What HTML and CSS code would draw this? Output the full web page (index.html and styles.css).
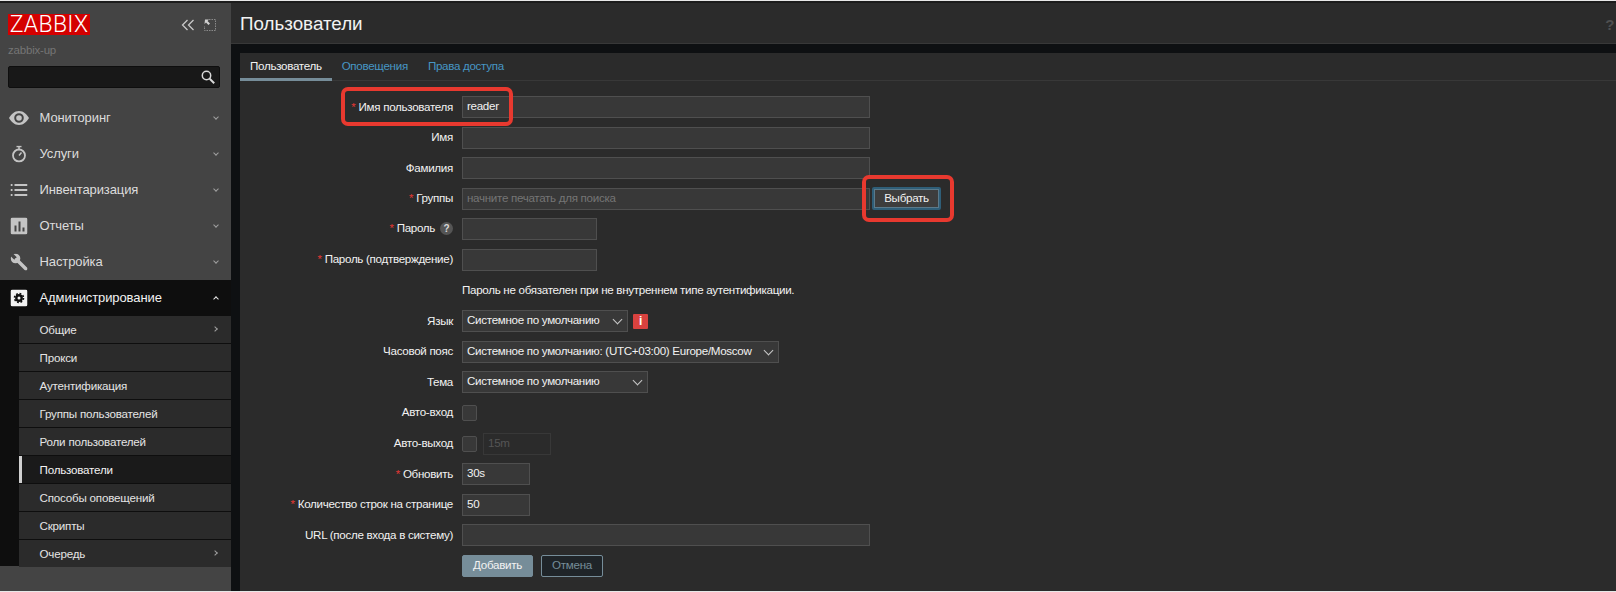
FILE: index.html
```html
<!DOCTYPE html>
<html lang="ru">
<head>
<meta charset="utf-8">
<title>Пользователи</title>
<link rel="stylesheet" href="styles.css">
</head>
<body>
<div class="app">
  <aside class="sidebar">
    <div class="brand">
      <span class="logo">ZABBIX</span>
      <div class="brand-tools">
        <svg class="tool" viewBox="0 0 14 12" width="14" height="12"><path d="M6.500 1 1.500 6l5 5M12.500 1l-5 5 5 5" fill="none" stroke="#c8c8c8" stroke-width="1.300"/></svg>
        <svg class="tool" viewBox="0 0 12 12" width="12" height="12"><path d="M5 .5h6.500V11.500H.5V7" fill="none" stroke="#8a8a8a" stroke-dasharray="1.500 1"/><path d="M1 .5h4L3.500 2 6 4.500 4.500 6 2 3.500.5 5z" fill="#d0d0d0"/></svg>
      </div>
    </div>
    <div class="host">zabbix-up</div>
    <div class="search">
      <svg viewBox="0 0 14 14" width="14" height="14"><circle cx="5.500" cy="5.500" r="4.200" fill="none" stroke="#d8d8d8" stroke-width="1.500"/><path d="m8.700 8.700 4.500 4.500" stroke="#d8d8d8" stroke-width="2"/></svg>
    </div>
    <nav class="menu">
      <a class="item"><svg class="ico" viewBox="0 0 20 14" width="20" height="14"><path fill-rule="evenodd" d="M10 0c4.600 0 8 3.500 10 7-2 3.500-5.400 7-10 7S2 10.500 0 7c2-3.500 5.400-7 10-7zm0 2.200a4.800 4.800 0 1 0 0 9.600 4.800 4.800 0 0 0 0-9.600zm0 2a2.800 2.800 0 1 1 0 5.600 2.800 2.800 0 0 1 0-5.600z" fill="#c4c4c4"/></svg><span>Мониторинг</span><i class="chev down"></i></a>
      <a class="item"><svg class="ico" viewBox="0 0 16 17" width="16" height="17"><circle cx="8" cy="10" r="6" fill="none" stroke="#c4c4c4" stroke-width="1.800"/><path d="M5.500 1h5M8 1v3M8 10l2.500-3" stroke="#c4c4c4" stroke-width="1.500" fill="none"/></svg><span>Услуги</span><i class="chev down"></i></a>
      <a class="item"><svg class="ico" viewBox="0 0 17 12" width="17" height="12"><path d="M0 1h2M4 1h13M0 6h2M4 6h13M0 11h2M4 11h13" stroke="#c4c4c4" stroke-width="2"/></svg><span>Инвентаризация</span><i class="chev down"></i></a>
      <a class="item"><svg class="ico" viewBox="0 0 17 17" width="17" height="17"><rect width="17" height="17" rx="2" fill="#c4c4c4"/><path d="M4 8h2v6H4zM8 4h2v10H8zM12 10h2v4h-2z" fill="#444"/></svg><span>Отчеты</span><i class="chev down"></i></a>
      <a class="item"><svg class="ico" viewBox="0 0 17 17" width="17" height="17"><circle cx="5" cy="5" r="4.800" fill="#c4c4c4"/><path d="M1.500-1 5.500 3l1 2-1.500 1.500L3 5.500-1 1.500z" fill="#444"/><path d="m6 6 9.300 9.300" stroke="#c4c4c4" stroke-width="3.400" stroke-linecap="round"/></svg><span>Настройка</span><i class="chev down"></i></a>
      <a class="item open"><svg class="ico" viewBox="0 0 17 17" width="17" height="17"><rect width="17" height="17" rx="2" fill="#f2f2f2"/><circle cx="8.500" cy="8.500" r="2.700" fill="none" stroke="#0e0e0e" stroke-width="2.400"/><circle cx="8.500" cy="8.500" r="4.500" fill="none" stroke="#0e0e0e" stroke-width="1.600" stroke-dasharray="1.800 1.730"/></svg><span>Администрирование</span><i class="chev up"></i></a>
      <div class="submenu">
        <a class="sub">Общие<i class="chev right"></i></a>
        <a class="sub">Прокси</a>
        <a class="sub">Аутентификация</a>
        <a class="sub">Группы пользователей</a>
        <a class="sub">Роли пользователей</a>
        <a class="sub current">Пользователи</a>
        <a class="sub">Способы оповещений</a>
        <a class="sub">Скрипты</a>
        <a class="sub">Очередь<i class="chev right"></i></a>
      </div>
    </nav>
  </aside>
  <main class="main">
    <header class="header">
      <h1>Пользователи</h1>
      <span class="help">?</span>
    </header>
    <section class="panel">
      <div class="tabs">
        <a class="tab active">Пользователь</a>
        <a class="tab">Оповещения</a>
        <a class="tab">Права доступа</a>
      </div>
      <form class="form">
        <div class="row"><label class="req">Имя пользователя</label><div class="field w-full">reader</div></div>
        <div class="row"><label>Имя</label><div class="field w-full"></div></div>
        <div class="row"><label>Фамилия</label><div class="field w-full"></div></div>
        <div class="row"><label class="req">Группы</label><div class="field w-full ph">начните печатать для поиска</div><button type="button" class="btn-select">Выбрать</button></div>
        <div class="row"><label class="req">Пароль <b class="q">?</b></label><div class="field w-pass"></div></div>
        <div class="row"><label class="req">Пароль (подтверждение)</label><div class="field w-pass"></div></div>
        <div class="row"><label></label><p class="note">Пароль не обязателен при не внутреннем типе аутентификации.</p></div>
        <div class="row"><label>Язык</label><div class="field select w-lang">Системное по умолчанию<i class="chev down lt"></i></div><b class="warn">i</b></div>
        <div class="row"><label>Часовой пояс</label><div class="field select w-tz">Системное по умолчанию: (UTC+03:00) Europe/Moscow<i class="chev down lt"></i></div></div>
        <div class="row"><label>Тема</label><div class="field select w-theme">Системное по умолчанию<i class="chev down lt"></i></div></div>
        <div class="row"><label>Авто-вход</label><div class="check"></div></div>
        <div class="row"><label>Авто-выход</label><div class="check"></div><div class="field w-auto off">15m</div></div>
        <div class="row"><label class="req">Обновить</label><div class="field w-short">30s</div></div>
        <div class="row"><label class="req">Количество строк на странице</label><div class="field w-short">50</div></div>
        <div class="row"><label>URL (после входа в систему)</label><div class="field w-full"></div></div>
        <div class="row"><label></label><button type="button" class="btn-add">Добавить</button><button type="button" class="btn-cancel">Отмена</button></div>
      </form>
    </section>
  </main>
</div>
<div class="mark mark-user"></div>
<div class="mark mark-select"></div>
</body>
</html>
```
FILE: styles.css
```css
* { box-sizing: border-box; }
html, body { margin: 0; height: 100%; }
body {
  background: #e8e8e8;
  font: 11.600px "Liberation Sans", Arial, sans-serif;
  letter-spacing: -.3px;
  color: #f2f2f2;
  overflow: hidden;
  position: relative;
}
.app {
  display: flex;
  height: 590px;
  margin-top: 1px;
  border-top: 2px solid #1c1c1c;
  background: #0e1012;
}
.sidebar {
  width: 231px;
  flex: none;
  background: #444;
  padding-top: 11px;
  display: flex;
  flex-direction: column;
}
.brand {
  display: flex;
  justify-content: space-between;
  align-items: center;
  padding: 0 15px 0 8px;
}
.logo {
  background: #d40000;
  color: #fff;
  font: 300 23px/21px Roboto, sans-serif;
  letter-spacing: .3px;
  width: 82px;
  height: 21px;
  text-align: center;
}
.brand-tools { display: flex; gap: 9px; align-items: center; }
.tool { display: block; }
.host { color: #757575; margin: 9px 0 0 8px; line-height: 13px; font-size: 11.500px; letter-spacing: -.2px; }
.search {
  margin: 9px 11px 0 8px;
  height: 22px;
  background: #181818;
  border: 1px solid #0e0e0e;
  border-radius: 2px;
  display: flex;
  align-items: center;
  justify-content: flex-end;
  padding-right: 4px;
}
.menu { margin-top: 12px; flex: 1; display: flex; flex-direction: column; }
.item {
  height: 36px;
  display: flex;
  align-items: center;
  position: relative;
  padding: 0 0 1px 39.500px;
  font-size: 13px;
  letter-spacing: -.1px;
  color: #dcdcdc;
}
.ico { position: absolute; left: 19px; top: 50%; transform: translate(-50%, -50%); }
.item.open { background: #0e0e0e; color: #f2f2f2; }
.submenu {
  background: #0e0e0e;
  padding-left: 19px;
  height: 250px;
  flex: none;
}
.sub {
  display: flex;
  align-items: center;
  justify-content: space-between;
  height: 27px;
  margin-bottom: 1px;
  padding: 0 14px 1px 20.500px;
  background: #2b2b2b;
  color: #e4e4e4;
  font-size: 11.600px;
  letter-spacing: -.2px;
}
.sub.current { background: #1a1a1a; border-left: 3px solid #d0d0d0; padding-left: 17.500px; color: #f2f2f2; }
.chev {
  width: 4px;
  height: 4px;
  border: solid #a0a0a0;
  border-width: 0 1.200px 1.200px 0;
  display: block;
}
.item .chev { position: absolute; right: 13.500px; }
.chev.down { transform: rotate(45deg); margin-top: -2px; }
.chev.up { transform: rotate(225deg); margin-top: 2px; border-color: #e8e8e8; }
.chev.right { transform: rotate(-45deg); }
.chev.lt { width: 7px; height: 7px; border-width: 0 1px 1px 0; border-color: #c8c8c8; }
.main { flex: 1; display: flex; flex-direction: column; min-width: 0; }
.header {
  height: 41px;
  background: #2b2b2b;
  border-bottom: 1px solid #383838;
  padding: 2px 0 0 9px;
  display: flex;
  align-items: center;
  justify-content: space-between;
}
h1 { margin: 0; font-size: 18.800px; font-weight: 400; letter-spacing: 0; color: #f2f2f2; }
.help { font-size: 15px; font-weight: 700; color: #4f4f4f; margin-right: 2px; }
.panel {
  margin: 9px 0 0 9px;
  flex: 1;
  background: #2b2b2b;
  min-height: 0;
}
.tabs {
  display: flex;
  height: 28px;
  border-bottom: 1px solid #383838;
}
.tab {
  padding: 0 10px;
  height: 28px;
  line-height: 26px;
  color: #4796c4;
}
.tab.active { color: #f2f2f2; border-bottom: 3px solid #768d99; }
.form {
  display: flex;
  flex-direction: column;
  gap: 8.600px;
  padding-top: 15px;
}
.row { display: flex; align-items: center; height: 22px; flex: none; }
.row label {
  width: 222px;
  padding: 0 9px 2px 0;
  flex: none;
  text-align: right;
  color: #f2f2f2;
}
.req::before { content: "*"; color: #e33734; margin-right: 3px; }
.q {
  display: inline-block;
  width: 13px;
  height: 13px;
  line-height: 13px;
  border-radius: 50%;
  background: #555;
  color: #d8d8d8;
  font-size: 10px;
  text-align: center;
  margin-left: 2px;
  letter-spacing: 0;
}
.field {
  height: 22px;
  background: #383838;
  border: 1px solid #4f4f4f;
  padding: 0 4px;
  line-height: 18px;
  color: #f2f2f2;
  position: relative;
  flex: none;
  white-space: nowrap;
}
.ph { color: #757575; }
.w-full { width: 408px; }
.w-pass { width: 135px; }
.w-lang { width: 166px; }
.w-tz { width: 317px; }
.w-theme { width: 186px; }
.w-short { width: 68px; }
.w-auto { width: 68px; margin-left: 6px; }
.off { background: #2b2b2b; border-color: #383838; color: #555; }
.select .chev { position: absolute; right: 6px; top: 5px; transform: rotate(45deg); margin: 0; }
.note { margin: 0 0 2px; color: #f2f2f2; }
.warn {
  width: 15px;
  height: 15px;
  line-height: 15px;
  margin-left: 5px;
  background: #d9423f;
  color: #fff;
  font-size: 12px;
  text-align: center;
  border-radius: 1px;
}
.check {
  width: 15px;
  height: 16px;
  background: #383838;
  border: 1px solid #4f4f4f;
  border-radius: 2px;
  flex: none;
}
button { font: 11.600px "Liberation Sans", Arial, sans-serif; letter-spacing: -.3px; height: 22px; padding: 0 0 2px; border-radius: 2px; }
.btn-select {
  width: 69px;
  margin-left: 2px;
  height: 23px;
  background: #3d3d3d;
  border: 2px solid #2f5e78;
  box-shadow: inset 0 0 0 1px #5b7a8b;
  color: #f2f2f2;
}
.btn-add { width: 71px; background: #768d99; border: 1px solid #768d99; color: #f2f2f2; }
.btn-cancel { width: 62px; margin-left: 8px; background: #1f2428; border: 1px solid #768d99; color: #768d99; }
.mark {
  position: absolute;
  border: 4px solid #e8392f;
  border-radius: 7px;
  pointer-events: none;
}
.mark-user { left: 341px; top: 87px; width: 172px; height: 39px; }
.mark-select { left: 862px; top: 175px; width: 92px; height: 47px; }
```
